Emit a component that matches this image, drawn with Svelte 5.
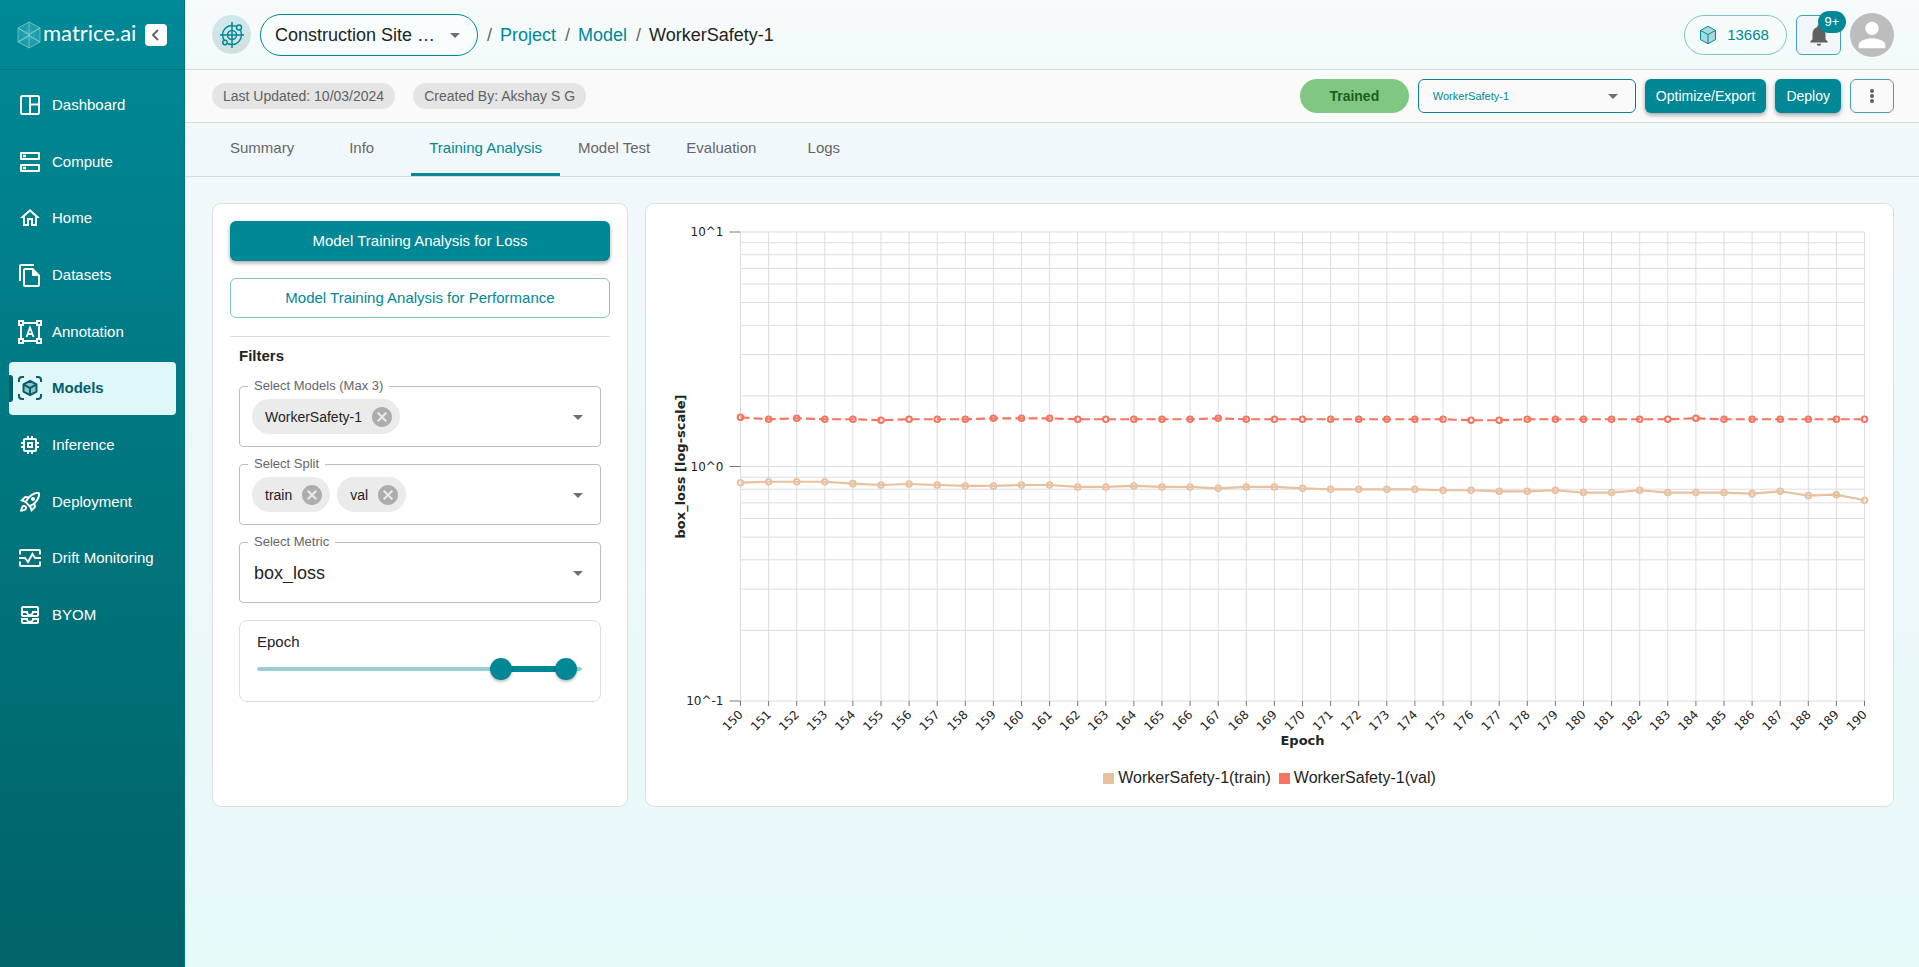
<script lang="ts">
  interface Series {
    name: string;
    color: string;
    dash?: string;
    values: number[];
  }

  const navItems = [
    'Dashboard', 'Compute', 'Home', 'Datasets', 'Annotation',
    'Models', 'Inference', 'Deployment', 'Drift Monitoring', 'BYOM',
  ];
  const tabs = ['Summary', 'Info', 'Training Analysis', 'Model Test', 'Evaluation', 'Logs'];

  let activeTab = $state('Training Analysis');
  let mode = $state<'Loss' | 'Performance'>('Loss');
  let models = $state(['WorkerSafety-1']);
  let splits = $state(['train', 'val']);
  let from = $state(150);
  let to = $state(190);

  const series: Series[] = [
    {
      name: 'WorkerSafety-1(train)',
      color: '#e8c1a0',
      values: [
        0.853, 0.861, 0.861, 0.861, 0.845, 0.834, 0.842, 0.834, 0.826, 0.826, 0.834, 0.834, 0.818, 0.818,
        0.826, 0.818, 0.818, 0.807, 0.818, 0.818, 0.807, 0.799, 0.799, 0.799, 0.799, 0.792, 0.792, 0.784,
        0.784, 0.792, 0.774, 0.774, 0.792, 0.774, 0.774, 0.774, 0.766, 0.784, 0.751, 0.758, 0.718,
      ],
    },
    {
      name: 'WorkerSafety-1(val)',
      color: '#f47560',
      dash: '9 4.1',
      values: [
        1.62, 1.59, 1.605, 1.59, 1.59, 1.575, 1.59, 1.59, 1.59, 1.605, 1.605, 1.605, 1.59, 1.59,
        1.59, 1.59, 1.59, 1.605, 1.59, 1.59, 1.59, 1.59, 1.59, 1.59, 1.59, 1.59, 1.575, 1.575,
        1.59, 1.59, 1.59, 1.59, 1.59, 1.59, 1.605, 1.59, 1.59, 1.59, 1.59, 1.59, 1.59,
      ],
    },
  ];

  /* The plot stretches with its card; only the height is fixed. */
  const left = 94.5;
  const right = 28.5;
  const top = 28;
  const bottom = 497;
  let width = $state(1247);

  const epochs = Array.from({ length: 41 }, (_, i) => 150 + i);
  const x = (i: number): number => left + (i * (width - left - right)) / (epochs.length - 1);
  const y = (v: number): number => top + ((1 - Math.log10(v)) * (bottom - top)) / 2;
  const gridValues = [0.1, 1].flatMap((d) => [1, 2, 3, 4, 5, 6, 7, 8, 9].map((n) => n * d)).concat(10);
  const decades = [
    { value: 10, label: '10^1' },
    { value: 1, label: '10^0' },
    { value: 0.1, label: '10^-1' },
  ];
  const line = (s: Series): string => s.values.map((v, i) => `${x(i)},${y(v)}`).join(' ');
</script>

{#snippet caret()}
  <svg class="caret" width="24" height="24" viewBox="0 0 24 24" aria-hidden="true"><path d="m7 10 5 5 5-5z" /></svg>
{/snippet}

{#snippet cube(size: number)}
  <svg width={size} height={size} viewBox="0 0 24 24" fill="none" stroke="currentColor" stroke-width="1.2" stroke-linejoin="round" aria-hidden="true">
    <path d="M12 1.5 21 6.5v11l-9 5-9-5v-11z" fill="currentColor" fill-opacity="0.3" />
    <path d="m3 6.5 9 5 9-5M12 11.5v11" />
  </svg>
{/snippet}

{#snippet navIcon(name: string)}
  <svg width="24" height="24" viewBox="0 0 24 24" fill="none" stroke="currentColor" stroke-width="2" aria-hidden="true">
    {#if name === 'Dashboard'}
      <rect x="3" y="3" width="18" height="18" rx="1.500" />
      <path d="M12 3v18M12 11.500h9" />
    {:else if name === 'Compute'}
      <path d="M3 3h18v6H3zM3 15h18v6H3z" stroke-linejoin="round" />
      <path d="M5 6h3M5 18h3" stroke-width="2.500" />
    {:else if name === 'Annotation'}
      <path d="M1 1h4v4H1zM19 1h4v4h-4zM1 19h4v4H1zM19 19h4v4h-4zM5 3h14M5 21h14M3 5v14M21 5v14" />
      <path d="M8.500 17 12 7.500 15.500 17M9.500 14h5" stroke-width="1.800" />
    {:else if name === 'Models'}
      <path d="M1 6V4a3 3 0 0 1 3-3h2M18 1h2a3 3 0 0 1 3 3v2M23 18v2a3 3 0 0 1-3 3h-2M6 23H4a3 3 0 0 1-3-3v-2" />
      <path d="m12 4.800 6.500 3.600v7.200L12 19.200l-6.500-3.600V8.400z" fill="currentColor" fill-opacity="0.35" stroke-linejoin="round" />
      <path d="M5.500 8.400 12 12l6.500-3.600M12 12v7" />
    {:else if name === 'Drift Monitoring'}
      <path d="M2 8.500V5a1 1 0 0 1 1-1h18a1 1 0 0 1 1 1v3.500M2 15.500V19a1 1 0 0 0 1 1h18a1 1 0 0 0 1-1v-3.500M1 12h6l3 4 4.500-8 2.500 4h6" />
    {:else}
      <g fill="currentColor" stroke="none">
        {#if name === 'Home'}
          <path d="m12 5.690 5 4.500V18h-2v-6H9v6H7v-7.810l5-4.500M12 3 2 12h3v8h6v-6h2v6h6v-8h3L12 3z" />
        {:else if name === 'Datasets'}
          <path d="M16 1H3a2 2 0 0 0-2 2v15h2V3h13V1zm-1 4H7a2 2 0 0 0-2 2v15a2 2 0 0 0 2 2h13a2 2 0 0 0 2-2V12l-7-7zM7 22V7h7v6h6v9H7z" />
        {:else if name === 'Inference'}
          <path d="M15 9H9v6h6V9zm-2 4h-2v-2h2v2zm8-2V9h-2V7c0-1.100-.9-2-2-2h-2V3h-2v2h-2V3H9v2H7c-1.100 0-2 .9-2 2v2H3v2h2v2H3v2h2v2c0 1.100.9 2 2 2h2v2h2v-2h2v2h2v-2h2c1.100 0 2-.9 2-2v-2h2v-2h-2v-2h2zm-4 6H7V7h10v10z" />
        {:else if name === 'Deployment'}
          <path d="M6 15c-.83 0-1.580.34-2.120.88C2.700 17.060 2 22 2 22s4.940-.7 6.120-1.880c.54-.54.88-1.290.88-2.120 0-1.660-1.340-3-3-3zm.71 3.710c-.28.28-2.170.76-2.170.76s.47-1.880.76-2.170c.17-.19.42-.3.7-.3.55 0 1 .45 1 1 0 .28-.11.53-.29.71zm10.710-5.060c6.360-6.360 4.240-11.310 4.240-11.310S16.710.22 10.350 6.580l-2.490-.5c-.65-.13-1.330.08-1.810.55L2 10.690l5 2.140L11.170 17l2.140 5 4.050-4.050c.47-.47.68-1.150.55-1.810l-.49-2.490zM7.410 10.830l-1.910-.82 1.970-1.970 1.440.29c-.57.83-1.080 1.700-1.500 2.500zm6.580 7.670-.82-1.910c.8-.42 1.670-.93 2.490-1.500l.29 1.440-1.960 1.970zM16 12.240c-1.320 1.320-3.380 2.400-4.040 2.730l-2.930-2.930c.32-.65 1.400-2.710 2.730-4.040 4.680-4.680 8.230-3.990 8.230-3.990s.69 3.550-3.990 8.230zM15 11c1.100 0 2-.9 2-2s-.9-2-2-2-2 .9-2 2 .9 2 2 2z" />
        {:else}
          <path d="M19 3H5c-1.100 0-2 .9-2 2v7c0 1.100.9 2 2 2h14c1.100 0 2-.9 2-2V5c0-1.100-.9-2-2-2zM5 10h3.130c.21.78.67 1.470 1.270 2H5v-2zm14 2h-4.400c.6-.53 1.060-1.220 1.270-2H19v2zm0-4h-5v1c0 1.070-.93 2-2 2s-2-.93-2-2V8H5V5h14v3zm-5 7v1c0 .47-.19.9-.48 1.250-.37.45-.92.75-1.520.75s-1.150-.3-1.520-.75c-.29-.35-.48-.78-.48-1.250v-1H3v4c0 1.100.9 2 2 2h14c1.100 0 2-.9 2-2v-4h-7zm-9 2h3.130c.02.09.06.17.09.25.24.68.65 1.280 1.180 1.750H5v-2zm14 2h-4.400c.54-.47.95-1.070 1.180-1.750.03-.08.07-.17.09-.25H19v2z" />
        {/if}
      </g>
    {/if}
  </svg>
{/snippet}

{#snippet chips(id: string, label: string, items: string[], remove: (item: string) => void)}
  <div class="field">
    <label for={id}>{label}</label>
    {#each items as item (item)}
      <span class="chip">
        {item}
        <button type="button" aria-label="Remove {item}" onclick={() => remove(item)}>
          <svg width="24" height="24" viewBox="0 0 24 24"><path d="M12 2C6.470 2 2 6.470 2 12s4.470 10 10 10 10-4.470 10-10S17.530 2 12 2zm5 13.590L15.590 17 12 13.410 8.410 17 7 15.590 10.590 12 7 8.410 8.410 7 12 10.590 15.590 7 17 8.410 13.410 12 17 15.590z" /></svg>
        </button>
      </span>
    {/each}
    <input {id} type="text" autocomplete="off" />
    {@render caret()}
  </div>
{/snippet}

<div class="app">
  <aside>
    <div class="brand">
      <svg class="mark" width="24" height="28" viewBox="0 0 24 28" fill="none" stroke="#7fd3d8" stroke-width="0.7" aria-hidden="true">
        <path d="M12 1 23 7v14l-11 6-11-6V7z" fill="#5fc0c8" fill-opacity="0.35" />
        <path d="m1 7 22 14M23 7 1 21M12 1v26M1 7l11 6 11-6M1 21l11-6 11 6" />
        <path d="m12 9 5 2.500v5L12 19l-5-2.500v-5z" stroke="#1fc1d6" />
      </svg>
      <span>matrice.ai</span>
      <button type="button" aria-label="Collapse menu">
        <svg width="22" height="22" viewBox="0 0 22 22" fill="none" stroke="#666" stroke-width="2"><path d="m13 6-5 5 5 5" /></svg>
      </button>
    </div>
    <nav>
      {#each navItems as item (item)}
        <a href="#{item.toLowerCase().replace(' ', '-')}" class:active={item === 'Models'}>
          {@render navIcon(item)}
          {item}
        </a>
      {/each}
    </nav>
  </aside>

  <div class="page">
    <header class="top">
      <div class="globe">
        <svg width="24" height="28" viewBox="0 0 24 28" fill="none" stroke="currentColor" stroke-width="1.500" aria-hidden="true">
          <circle cx="12" cy="14" r="9.500" />
          <circle cx="12" cy="14" r="4.500" />
          <path d="M12 1v26M0 14h24" />
          <circle cx="19" cy="6.500" r="2.500" fill="#d0e7ea" />
          <circle cx="5" cy="21.500" r="2.200" fill="#d0e2e4" />
        </svg>
      </div>
      <div class="select project">
        <select aria-label="Project"><option>Construction Site …</option></select>
        {@render caret()}
      </div>
      <ol class="crumbs">
        <li><a href="#project">Project</a></li>
        <li><a href="#model">Model</a></li>
        <li>WorkerSafety-1</li>
      </ol>
      <button type="button" class="credits">{@render cube(20)}13668</button>
      <button type="button" class="bell" aria-label="Notifications">
        <svg width="26" height="26" viewBox="0 0 24 24" aria-hidden="true"><path d="M12 22c1.100 0 2-.9 2-2h-4c0 1.100.89 2 2 2zm6-6v-5c0-3.070-1.640-5.640-4.500-6.320V4c0-.83-.67-1.500-1.500-1.500s-1.500.67-1.500 1.500v.68C7.630 5.360 6 7.920 6 11v5l-2 2v1h16v-1l-2-2z" /></svg>
        <span>9+</span>
      </button>
      <button type="button" class="avatar" aria-label="Account">
        <svg width="40" height="40" viewBox="0 0 24 24" aria-hidden="true"><path d="M12 12c2.210 0 4-1.790 4-4s-1.790-4-4-4-4 1.790-4 4 1.790 4 4 4zm0 2c-2.670 0-8 1.340-8 4v2h16v-2c0-2.660-5.330-4-8-4z" /></svg>
      </button>
    </header>

    <div class="meta">
      <span class="tag">Last Updated: 10/03/2024</span>
      <span class="tag">Created By: Akshay S G</span>
      <span class="status">Trained</span>
      <div class="select model">
        <select aria-label="Model"><option>WorkerSafety-1</option></select>
        {@render caret()}
      </div>
      <button type="button" class="solid">Optimize/Export</button>
      <button type="button" class="solid">Deploy</button>
      <button type="button" class="more" aria-label="More">
        <svg width="20" height="20" viewBox="0 0 20 20" aria-hidden="true"><circle cx="10" cy="5" r="2" /><circle cx="10" cy="10" r="2" /><circle cx="10" cy="15" r="2" /></svg>
      </button>
    </div>

    <div class="tabs" role="tablist">
      {#each tabs as tab (tab)}
        <button type="button" role="tab" aria-selected={tab === activeTab} onclick={() => (activeTab = tab)}>{tab}</button>
      {/each}
    </div>

    <main>
      <section class="card panel">
        {#each ['Loss', 'Performance'] as const as m (m)}
          <button type="button" class={m === mode ? 'solid' : 'outline'} onclick={() => (mode = m)}>
            Model Training Analysis for {m}
          </button>
        {/each}
        <div class="filters">
          <h2>Filters</h2>
          {@render chips('models', 'Select Models (Max 3)', models, (item) => (models = models.filter((m) => m !== item)))}
          {@render chips('split', 'Select Split', splits, (item) => (splits = splits.filter((s) => s !== item)))}
          <div class="field">
            <label for="metric">Select Metric</label>
            <select id="metric"><option>box_loss</option></select>
            {@render caret()}
          </div>
          <div class="epoch">
            <span>Epoch</span>
            <div class="range">
              <i class="rail"></i>
              <i class="track" style="left: {from / 2}%; right: {100 - to / 2}%"></i>
              <input type="range" aria-label="First epoch" min="0" max="200" bind:value={from} />
              <input type="range" aria-label="Last epoch" min="0" max="200" bind:value={to} />
            </div>
          </div>
        </div>
      </section>

      <section class="card chart">
        <div bind:clientWidth={width}>
          <svg {width} height="556" role="img" aria-label="box_loss by epoch">
            <g stroke="#ddd">
              {#each gridValues as v (v)}
                <line x1={left} x2={width - right} y1={y(v)} y2={y(v)} />
              {/each}
              {#each epochs as e, i (e)}
                <line x1={x(i)} x2={x(i)} y1={top} y2={bottom} />
              {/each}
            </g>
            {#each decades as d (d.value)}
              <line class="tick" x1={left - 11} x2={left} y1={y(d.value)} y2={y(d.value)} />
              <text x={left - 17} y={y(d.value) + 4} text-anchor="end">{d.label}</text>
            {/each}
            {#each epochs as e, i (e)}
              <line class="tick" x1={x(i)} x2={x(i)} y1={bottom} y2={bottom + 5} />
              <text transform="translate({x(i) - 1} {bottom + 10}) rotate(-45)" y="6" text-anchor="end">{e}</text>
            {/each}
            <text class="title" transform="translate(39 {(top + bottom) / 2}) rotate(-90)" text-anchor="middle">box_loss [log-scale]</text>
            <text class="title" x={(left + width - right) / 2} y="541" text-anchor="middle">Epoch</text>
            {#each series as s (s.name)}
              <g fill="#fff" stroke={s.color} stroke-width="2">
                {#each s.values as v, i (i)}
                  <circle cx={x(i)} cy={y(v)} r="2.800" />
                {/each}
              </g>
              <polyline points={line(s)} fill="none" stroke={s.color} stroke-width="2.200" stroke-dasharray={s.dash} />
            {/each}
          </svg>
        </div>
        <ul class="legend">
          {#each series as s (s.name)}
            <li><i style="background: {s.color}"></i>{s.name}</li>
          {/each}
        </ul>
      </section>
    </main>
  </div>
</div>

<style>
  :global(body) { margin: 0; }
  .app { --teal: #008896; --ink: #232323; display: grid; grid-template-columns: 185px 1fr; min-height: 100vh; background: linear-gradient(#f6fcfb, #f1f8fb 16%, #eef8fa 45%, #e8f9fa); color: var(--ink); font: 15px/20px "Liberation Sans", Arial, sans-serif; }
  .app *, .app *::before { box-sizing: border-box; }
  button, input, select { font: inherit; color: inherit; margin: 0; }
  button { display: flex; align-items: center; justify-content: center; padding: 0; border: 0; background: none; cursor: pointer; white-space: nowrap; }
  a { color: var(--teal); text-decoration: none; }
  ol, ul { list-style: none; margin: 0; padding: 0; }
  svg { display: block; flex: none; }

  aside { background: linear-gradient(#008997, #006367); color: #fff; border-right: 1px solid #00747f; }
  .brand { display: flex; align-items: center; height: 70px; padding: 0 17px; border-bottom: 1px solid #00747f; }
  .brand span { flex: 1; padding: 0 0 4px 2px; font: 22px/28px Lato, sans-serif; }
  .brand button { width: 22px; height: 22px; border-radius: 4px; background: #fff; }
  nav { display: flex; flex-direction: column; justify-content: space-between; height: 563px; margin: 9px 8px 0 9px; }
  nav a { position: relative; display: flex; align-items: center; gap: 10px; height: 53px; padding: 0 0 1px 9px; border-radius: 4px; color: #fff; white-space: nowrap; }
  nav a.active { background: #e0f7fa; color: #00606a; font-weight: bold; }
  nav a.active::before { content: ""; position: absolute; left: 0; width: 4px; height: 27px; border-radius: 0 3px 3px 0; background: #00606a; }

  .page { min-width: 0; }
  .top, .meta, .tabs { display: flex; align-items: center; border-bottom: 1px solid #d5dadc; padding: 0 25px 0 27px; }
  .top { height: 70px; gap: 9px; font-size: 18px; }
  .globe { display: grid; place-items: center; width: 39px; height: 39px; border-radius: 50%; background: linear-gradient(#d0e9ec, #d0dfe0); color: var(--teal); }
  .select { display: grid; align-items: center; }
  .select > :global(*) { grid-area: 1 / 1; }
  select { appearance: none; width: 100%; height: 100%; border: 0; background: none; outline: 0; }
  .caret { justify-self: end; fill: #6f6f6f; pointer-events: none; }
  .project { width: 218px; height: 42px; border: 1px solid var(--teal); border-radius: 21px; background: #f8fdfd; padding-right: 10px; }
  .project select { padding: 0 24px 0 14px; }
  .crumbs { display: flex; flex: 1; }
  .crumbs li::before { content: "/"; color: #666; padding-right: 8px; }
  .crumbs li { padding-right: 9px; }
  .credits { width: 103px; height: 40px; gap: 9px; padding-right: 4px; border: 1px solid #80c4ca; border-radius: 20px; color: var(--teal); font-size: 15px; }
  .bell { position: relative; width: 45px; height: 40px; border: 1px solid #40a5b0; border-radius: 6px; background: #f0f6f9; fill: #616161; }
  .bell span { position: absolute; top: -5px; right: -6px; width: 28px; height: 22px; border-radius: 11px; background: var(--teal); color: #fff; font-size: 13px; line-height: 22px; }
  .avatar { width: 44px; height: 44px; border-radius: 50%; background: #bdbdbd; fill: #fff; }

  .meta { height: 53px; gap: 9px; background: #fafafa; font-size: 14px; }
  .tag { height: 26px; padding: 0 11px; border-radius: 13px; background: #e5e5e5; color: #616161; line-height: 26px; }
  .tag + .tag { margin-left: 9px; }
  .status { width: 109px; height: 34px; margin-left: auto; border-radius: 17px; background: #81c784; color: #1b5e20; font-weight: bold; line-height: 34px; text-align: center; }
  .model { width: 218px; height: 34px; border: 1px solid var(--teal); border-radius: 6px; padding-right: 10px; color: var(--teal); font-size: 11px; }
  .model select { padding: 0 24px 0 14px; }
  .solid { height: 34px; padding: 0 11px; border-radius: 6px; background: var(--teal); color: #fff; box-shadow: 0 2px 4px rgb(0 0 0 / 35%); }
  .outline { border: 1px solid #80c4ca; border-radius: 6px; color: var(--teal); }
  .more { width: 44px; height: 34px; border: 1px solid #40a5b0; border-radius: 6px; fill: #616161; }

  .tabs { height: 54px; }
  .tabs button { height: 53px; min-width: 99px; padding: 0 18px; border-bottom: 3px solid transparent; color: #666; }
  .tabs button[aria-selected='true'] { border-bottom-color: var(--teal); color: var(--teal); }

  main { display: flex; gap: 17px; padding: 26px 25px 26px 27px; }
  .card { border: 1px solid #dedede; border-radius: 9px; background: #fff; }
  .panel { flex: none; display: flex; flex-direction: column; gap: 17px; width: 416px; padding: 17px; }
  .panel > button { height: 40px; font-size: 15px; }
  .filters { display: flex; flex-direction: column; gap: 17px; margin-top: 1px; border-top: 1px solid #dedede; padding: 8px 9px 0; }
  h2 { margin: 0 0 3px; font-size: 15px; line-height: 21px; }
  .field { position: relative; display: flex; align-items: center; gap: 7px; height: 61px; border: 1px solid #bdbdbd; border-radius: 4px; padding: 0 10px 0 12px; }
  .field label { position: absolute; top: -11px; left: 8px; padding: 0 6px; background: #fff; color: #666; font-size: 13px; }
  .field input { flex: 1; min-width: 0; height: 32px; border: 0; background: none; outline: 0; }
  .field select { padding-left: 2px; font-size: 18px; }
  .chip { display: flex; align-items: center; gap: 8px; height: 35px; padding: 0 6px 0 13px; border-radius: 18px; background: #ebebeb; font-size: 14px; }
  .chip button { fill: #adadad; }
  .epoch { display: flex; flex-direction: column; height: 82px; border: 1px solid #dedede; border-radius: 8px; padding: 11px 18px 11px 17px; }
  .range { position: relative; display: grid; align-items: center; height: 22px; margin-top: 6px; }
  .range i { position: absolute; border-radius: 3px; }
  .rail { left: 0; right: 0; height: 4px; background: #99cfd5; }
  .track { height: 6px; background: var(--teal); }
  /* Both thumbs share the rail; only the thumbs take the pointer. The inputs
     hang over by half a thumb so that a value sits under its centre. */
  .range input { grid-area: 1 / 1; position: relative; margin: 0 -11px; appearance: none; background: none; pointer-events: none; outline: 0; }
  .range input::-webkit-slider-thumb { appearance: none; width: 22px; height: 22px; border-radius: 50%; background: var(--teal); box-shadow: 0 2px 3px rgb(0 0 0 / 25%); pointer-events: auto; }

  .chart { flex: 1; min-width: 0; padding-bottom: 10px; }
  .chart > div { overflow: hidden; }
  .chart text { fill: #232323; font: 12px "DejaVu Sans", sans-serif; }
  .chart .title { font-size: 13px; font-weight: bold; }
  .tick { stroke: #777; }
  .legend { display: flex; justify-content: center; gap: 8px; font-size: 16px; line-height: 36px; }
  .legend li { display: flex; align-items: center; gap: 4px; }
  .legend i { width: 11px; height: 11px; }
</style>
